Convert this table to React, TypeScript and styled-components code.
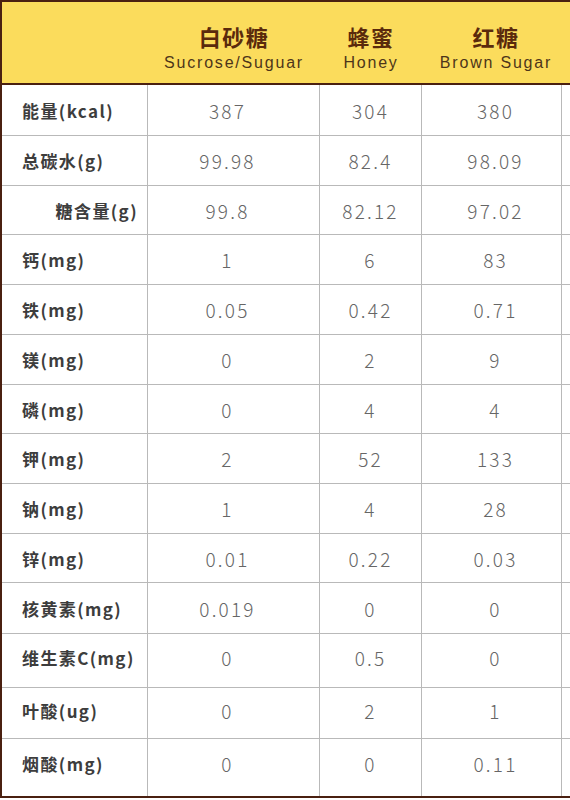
import React from 'react'
import styled, { createGlobalStyle } from 'styled-components'

const GlobalStyle = createGlobalStyle`
    html, body {
        margin: 0;
        padding: 0;
        background: #ffffff;
        overflow: hidden;
    }
`

const COLS = '146px 172px 102px 140px 140px'
const BROWN = '#4a2010'
const LINE = '#b9b9b9'

type Row = { label: string; values: string[]; height: number; pad?: number; indent?: boolean }

const rows: Row[] = [
    { label: '能量(kcal)', values: ['387', '304', '380'], height: 51 },
    { label: '总碳水(g)', values: ['99.98', '82.4', '98.09'], height: 50 },
    { label: '糖含量(g)', values: ['99.8', '82.12', '97.02'], height: 49, indent: true },
    { label: '钙(mg)', values: ['1', '6', '83'], height: 50 },
    { label: '铁(mg)', values: ['0.05', '0.42', '0.71'], height: 50 },
    { label: '镁(mg)', values: ['0', '2', '9'], height: 50 },
    { label: '磷(mg)', values: ['0', '4', '4'], height: 49 },
    { label: '钾(mg)', values: ['2', '52', '133'], height: 50 },
    { label: '钠(mg)', values: ['1', '4', '28'], height: 50 },
    { label: '锌(mg)', values: ['0.01', '0.22', '0.03'], height: 49 },
    { label: '核黄素(mg)', values: ['0.019', '0', '0'], height: 51 },
    { label: '维生素C(mg)', values: ['0', '0.5', '0'], height: 54, pad: 6 },
    { label: '叶酸(ug)', values: ['0', '2', '1'], height: 51, pad: 5 },
    { label: '烟酸(mg)', values: ['0', '0', '0.11'], height: 57, pad: 9 },
]

// small horizontal nudge of the numbers in each column, as in the source picture
const nudges = [-6, 0, 4]

const heads = [
    { cn: '白砂糖', en: 'Sucrose/Suguar' },
    { cn: '蜂蜜', en: 'Honey' },
    { cn: '红糖', en: 'Brown Sugar' },
]

const Page = styled.div`
    width: 570px;
    height: 800px;
    overflow: hidden;
    background: #ffffff;
`

const Frame = styled.div`
    width: 702px;
    border-left: 3px solid ${BROWN};
    border-top: 2px solid ${BROWN};
    border-bottom: 2px solid ${BROWN};
    margin-left: -1px;
`

const HeaderRow = styled.div`
    display: grid;
    grid-template-columns: ${COLS};
    height: 83px;
    box-sizing: border-box;
    background: #fbdc5c;
    border-bottom: 2px solid ${BROWN};
`

const HeadCell = styled.div<{ $nudge: number }>`
    display: flex;
    flex-direction: column;
    align-items: center;
    padding-top: 20px;
    transform: translateX(${(p) => p.$nudge}px);
`

const HeadCn = styled.div`
    font-family: 'Noto Sans CJK SC', sans-serif;
    font-weight: 700;
    font-size: 22px;
    line-height: 29px;
    letter-spacing: 1.5px;
    color: #5a2a0c;
`

const HeadEn = styled.div`
    font-family: 'Liberation Sans', Arial, sans-serif;
    font-size: 16px;
    line-height: 20px;
    margin-top: 2px;
    letter-spacing: 1.8px;
    color: #4d3519;
    white-space: nowrap;
`

const BodyRow = styled.div<{ $h: number; $last?: boolean }>`
    display: grid;
    grid-template-columns: ${COLS};
    height: ${(p) => p.$h}px;
    box-sizing: border-box;
    border-bottom: ${(p) => (p.$last ? 'none' : `1px solid ${LINE}`)};
`

const Label = styled.div<{ $indent?: boolean; $pad: number }>`
    display: flex;
    align-items: center;
    justify-content: ${(p) => (p.$indent ? 'flex-end' : 'flex-start')};
    padding: ${(p) => (p.$indent ? `0 9px ${p.$pad}px 0` : `0 0 ${p.$pad}px 20px`)};
    border-right: 1px solid ${LINE};
    font-family: 'Noto Sans CJK SC', sans-serif;
    font-weight: 700;
    font-size: 17px;
    letter-spacing: 1.4px;
    color: #3d3d3d;
    white-space: nowrap;
`

const Value = styled.div<{ $pad: number; $nudge?: number }>`
    display: flex;
    align-items: center;
    justify-content: center;
    padding-bottom: ${(p) => p.$pad}px;
    border-right: 1px solid ${LINE};
    font-family: 'Noto Sans CJK SC', sans-serif;
    font-weight: 300;
    font-size: 19px;
    letter-spacing: 2.2px;
    color: #666666;

    span {
        transform: translateX(${(p) => p.$nudge ?? 0}px);
    }
`

export default function App() {
    return (
        <Page>
            <GlobalStyle />
            <Frame>
                <HeaderRow>
                    <div />
                    {heads.map((h, j) => (
                        <HeadCell key={h.cn} $nudge={j === 2 ? 4 : 0}>
                            <HeadCn>{h.cn}</HeadCn>
                            <HeadEn>{h.en}</HeadEn>
                        </HeadCell>
                    ))}
                    <div />
                </HeaderRow>
                {rows.map((r, i) => (
                    <BodyRow key={r.label} $h={r.height} $last={i === rows.length - 1}>
                        <Label $indent={r.indent} $pad={r.pad ?? 0}>
                            {r.label}
                        </Label>
                        {r.values.map((v, j) => (
                            <Value key={j} $pad={r.pad ?? 0} $nudge={nudges[j]}>
                                <span>{v}</span>
                            </Value>
                        ))}
                        <Value $pad={0} />
                    </BodyRow>
                ))}
            </Frame>
        </Page>
    )
}
